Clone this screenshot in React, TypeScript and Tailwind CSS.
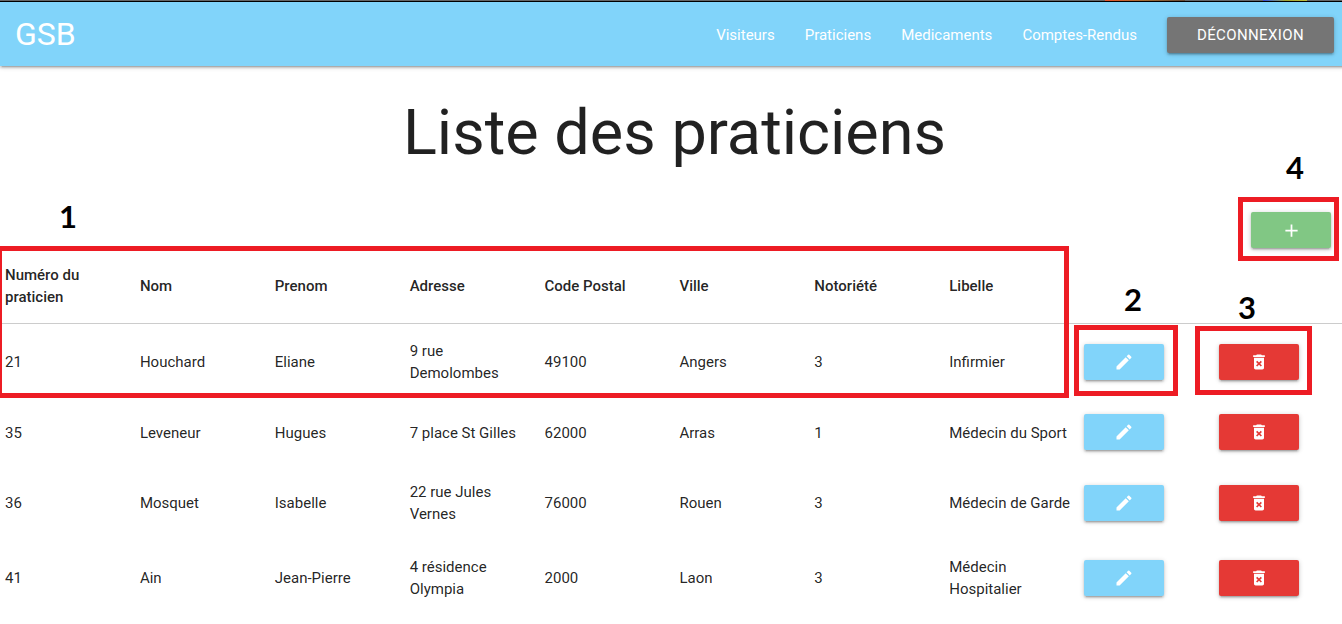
import { MdAdd, MdDeleteForever, MdEdit } from "react-icons/md";

type Praticien = {
  numero: number;
  nom: string;
  prenom: string;
  adresse: string;
  codePostal: string;
  ville: string;
  notoriete: number;
  libelle: string;
};

const praticiens: Praticien[] = [
  { numero: 21, nom: "Houchard", prenom: "Eliane", adresse: "9 rue Demolombes", codePostal: "49100", ville: "Angers", notoriete: 3, libelle: "Infirmier" },
  { numero: 35, nom: "Leveneur", prenom: "Hugues", adresse: "7 place St Gilles", codePostal: "62000", ville: "Arras", notoriete: 1, libelle: "Médecin du Sport" },
  { numero: 36, nom: "Mosquet", prenom: "Isabelle", adresse: "22 rue Jules Vernes", codePostal: "76000", ville: "Rouen", notoriete: 3, libelle: "Médecin de Garde" },
  { numero: 41, nom: "Ain", prenom: "Jean-Pierre", adresse: "4 résidence Olympia", codePostal: "2000", ville: "Laon", notoriete: 3, libelle: "Médecin Hospitalier" },
];

const columns = ["Numéro du praticien", "Nom", "Prenom", "Adresse", "Code Postal", "Ville", "Notoriété", "Libelle"];
const links = ["Visiteurs", "Praticiens", "Medicaments", "Comptes-Rendus"];

const raised = "shadow-[0_2px_2px_0_rgba(0,0,0,0.14),0_3px_1px_-2px_rgba(0,0,0,0.12),0_1px_5px_0_rgba(0,0,0,0.2)]";
const iconButton = `flex h-9 w-20 items-center justify-center rounded-xs text-white ${raised}`;

function TopStrip() {
  return (
    <div className="relative z-10 bg-black pb-px">
      <div className="flex h-px justify-end bg-[#666666]">
        <span className="w-20 bg-linear-to-r from-[#e8542c] via-[#a06a32] to-[#6a4a32]" />
        <span className="mr-[42px] ml-[78px] w-11 bg-linear-to-r from-[#3c46d4] via-[#a0a032] to-[#c0c03c]" />
      </div>
    </div>
  );
}

function NavBar() {
  return (
    <nav className={`relative flex h-16 items-center justify-between bg-[#81d4fa] px-[15px] text-white ${raised}`}>
      <a href="#accueil" className="text-[32px] leading-[64px]">GSB</a>
      <div className="flex items-center gap-[30px] pt-0.5">
        {links.map((link) => (
          <a key={link} href={`#${link}`}>{link}</a>
        ))}
        <button type="button" className={`h-9 rounded-xs bg-[#757575] px-[30px] tracking-wide uppercase ${raised}`}>
          Déconnexion
        </button>
      </div>
    </nav>
  );
}

function Row({ p }: { p: Praticien }) {
  return (
    <tr>
      {[p.numero, p.nom, p.prenom, p.adresse, p.codePostal, p.ville, p.notoriete, p.libelle].map((value, i) => (
        <td key={i} className="px-[5px] pt-4 pb-[15px]">{value}</td>
      ))}
      <td className="px-[5px] py-[15px]">
        <button type="button" aria-label={`Modifier ${p.nom}`} className={`${iconButton} bg-[#81d4fa]`}>
          <MdEdit size={20} />
        </button>
      </td>
      <td className="px-[5px] py-[15px]">
        <button type="button" aria-label={`Supprimer ${p.nom}`} className={`${iconButton} bg-[#e53935]`}>
          <MdDeleteForever size={20} />
        </button>
      </td>
    </tr>
  );
}

const marker = "pointer-events-none absolute border-5 border-[#ed1c24]";
const markerLabel = "pointer-events-none absolute font-['Lato',sans-serif] text-[31px] leading-8 font-bold text-black";

function Annotations() {
  return (
    <>
      <span className={`${markerLabel} top-[200px] left-[59px]`}>1</span>
      <span className={`${markerLabel} top-[283px] left-[1124px]`}>2</span>
      <span className={`${markerLabel} top-[291px] left-[1238px]`}>3</span>
      <span className={`${markerLabel} top-[151px] left-[1286px]`}>4</span>
      <div className={`${marker} top-[246px] left-[-3px] h-[152px] w-[1072px]`} />
      <div className={`${marker} top-[325px] left-[1074px] h-[71px] w-[104px]`} />
      <div className={`${marker} top-[326px] left-[1195px] h-[69px] w-[117px]`} />
      <div className={`${marker} top-[197px] left-[1238px] h-[64px] w-[101px]`} />
    </>
  );
}

export default function App() {
  return (
    <div className="relative min-h-screen overflow-hidden bg-white font-['Roboto',sans-serif] text-[15px] leading-[22px] text-black/87">
      <div className="-mr-[7px]">
        <TopStrip />
        <NavBar />
        <main>
          <h1 className="pt-[33px] text-center text-[63px] leading-[68px]">Liste des praticiens</h1>
          <div className="flex justify-end pt-[45px] pr-[18px]">
            <button type="button" aria-label="Ajouter un praticien" className={`${iconButton} bg-[#81c784]`}>
              <MdAdd size={21} />
            </button>
          </div>
          <table className="w-full table-fixed border-collapse text-left">
            <thead className="border-b border-black/20">
              <tr className="h-[75px]">
                {columns.map((column) => (
                  <th key={column} scope="col" className="px-[5px] pt-4 pb-[15px] font-medium">{column}</th>
                ))}
                <td />
                <td />
              </tr>
            </thead>
            <tbody>
              {praticiens.map((p) => (
                <Row key={p.numero} p={p} />
              ))}
            </tbody>
          </table>
        </main>
      </div>
      <Annotations />
    </div>
  );
}
